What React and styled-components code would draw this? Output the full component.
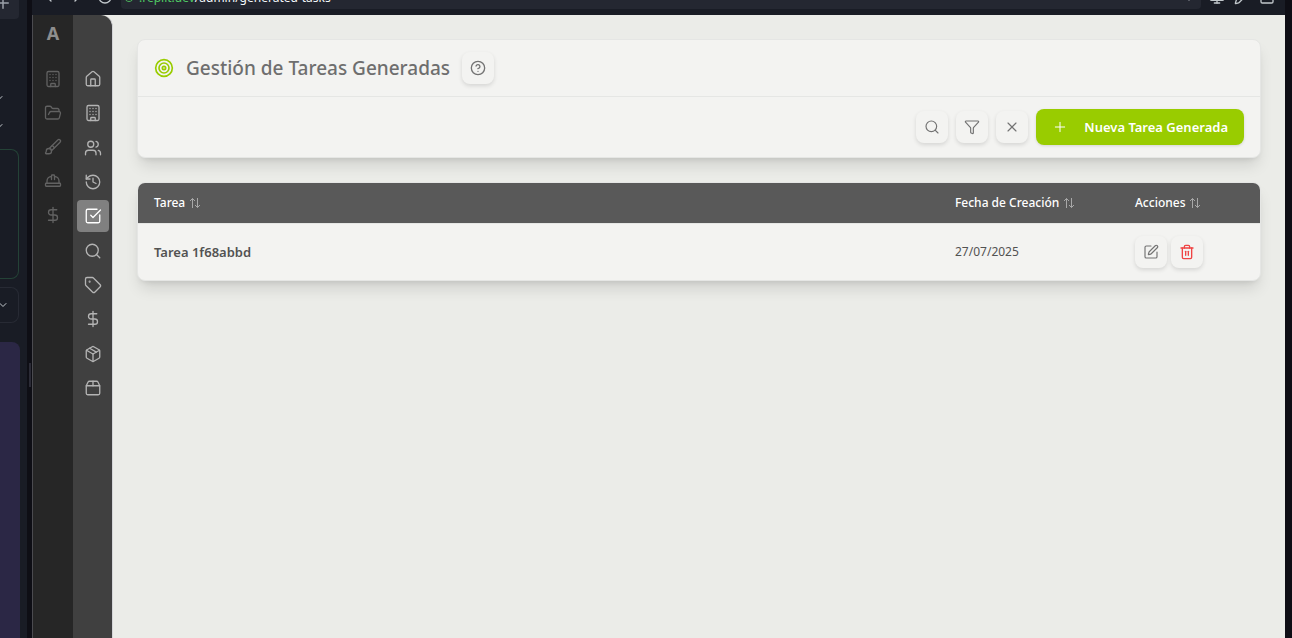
import React from "react";
import styled, { createGlobalStyle } from "styled-components";
import {
  House, Building, Users, History, SquareCheckBig, Search, Tag, DollarSign, Package, Package2,
  FolderOpen, Brush, HardHat, CircleHelp, Funnel, X, Plus, SquarePen, Trash2, ChevronDown,
  ChevronLeft, ChevronRight, RotateCw, Monitor, Pencil, Square, Target, Pin,
} from "lucide-react";

const GlobalStyle = createGlobalStyle`
  *, *::before, *::after { box-sizing: border-box; }
  body {
    margin: 0;
    background: #0e0e15;
    color: #525252;
    font-family: "Noto Sans", "Open Sans", sans-serif;
    font-size: 14px;
  }
  button { font: inherit; color: inherit; border: 0; padding: 0; background: none; cursor: pointer; }
  a { color: inherit; text-decoration: none; }
  svg { flex: none; }
`;

const Workspace = styled.div`
  display: flex;
  height: 100vh;
  padding-right: 7px;
  overflow: hidden;
`;

const AssistantPane = styled.aside`
  display: flex;
  flex-direction: column;
  width: 27px;
  flex: none;
  padding-right: 8px;
  background: #191c25;
  color: #c2c8cc;
`;

const NewTab = styled.button`
  display: flex;
  justify-content: flex-end;
  align-items: flex-end;
  height: 19px;
  padding: 0 7px 7px 0;
  background: #242731;
  border-radius: 0 0 4px 0;
  overflow: hidden;
  color: #9ba1a9;
`;

const FoldToggle = styled.button`
  display: flex;
  height: 28px;
  width: ${(p) => p.$width || 5}px;
  align-items: center;
  justify-content: flex-end;
  overflow: hidden;
`;

const FoldList = styled.div`
  display: flex;
  flex-direction: column;
  padding-top: 65px;
  height: 130px;
`;

const Card = styled.div`
  display: flex;
  align-items: center;
  height: ${(p) => p.$height}px;
  margin-bottom: ${(p) => p.$gap}px;
  border: 1px solid ${(p) => p.$line};
  border-left: 0;
  border-radius: 0 8px 8px 0;
`;

const Message = styled.div`
  flex: 1;
  margin-right: -1px;
  background: #2b2745;
  border-radius: 0 8px 0 0;
`;

const Splitter = styled.div`
  display: flex;
  align-items: flex-start;
  justify-content: center;
  width: 5px;
  flex: none;
  padding-top: 363px;
`;

const Grip = styled.div`
  width: 2px;
  height: 24px;
  background: #2b2b36;
`;

const Preview = styled.section`
  display: flex;
  flex-direction: column;
  flex: 1;
  min-width: 0;
  background: #191c25;
`;

const AddressRow = styled.div`
  display: flex;
  align-items: flex-end;
  gap: 8px;
  height: 15px;
  padding: 0 10px 6px 9px;
  overflow: hidden;
  color: #c2c8cc;
`;

const NavGroup = styled.div`
  display: flex;
  align-items: center;
  gap: ${(p) => p.$gap}px;
  height: 24px;
  flex: none;
`;

const Address = styled.div`
  display: flex;
  align-items: center;
  gap: 5px;
  flex: 1;
  height: 24px;
  padding: 0 8px 0 3px;
  background: #242731;
  border-radius: 4px;
  font-size: 12px;
  color: #f5f9fc;
`;

const Secure = styled.span`
  width: 10px;
  height: 10px;
  border: 1px solid #4bb35c;
  border-radius: 50%;
`;

const Url = styled.span`
  flex: 1;
  b { font-weight: 400; color: #4fc963; }
`;

const AppFrame = styled.div`
  display: flex;
  flex: 1;
  min-height: 0;
  border-left: 1px solid #4b4b50;
  background: #ebece8;
`;

const Rail = styled.nav`
  display: flex;
  flex-direction: column;
  align-items: center;
  width: 40px;
  flex: none;
  background: #262626;
  color: #626262;
`;

const SectionNav = styled(Rail)`
  background: #404040;
  color: #b4b4b4;
  border-right: 1px solid #d4d5d8;
  border-top-right-radius: 12px;
  padding-top: 48px;
`;

const Brand = styled.a`
  height: 48px;
  padding-top: 6px;
  font-size: 18px;
  line-height: 24px;
  font-weight: 700;
  color: #8e8e8e;
`;

const RailList = styled.div`
  display: flex;
  flex-direction: column;
  justify-content: space-between;
  height: ${(p) => p.$height}px;
`;

const RailItem = styled.a`
  display: flex;
  align-items: center;
  justify-content: center;
  width: 32px;
  height: 32px;
  border-radius: 4px;
  background: ${(p) => (p.$active ? "#808080" : "transparent")};
  color: ${(p) => (p.$active ? "#ffffff" : "inherit")};
`;

const Main = styled.main`
  flex: 1;
  min-width: 0;
  padding: 24px;
`;

const Panel = styled.section`
  background: #f3f3f1;
  border: 1px solid #e5e6e4;
  border-radius: 8px;
  box-shadow: 0 10px 15px -3px rgba(0, 0, 0, 0.12), 0 4px 6px -4px rgba(0, 0, 0, 0.12);
  margin-bottom: 24px;
  overflow: hidden;
`;

const TitleRow = styled.header`
  display: flex;
  align-items: center;
  height: 57px;
  padding: 0 16px;
  border-bottom: 1px solid #e5e6e4;
  color: #99cc00;
`;

const Title = styled.h1`
  margin: 0 12px;
  font-size: 19px;
  line-height: 28px;
  font-weight: 500;
  color: #6e6e6e;
`;

const Toolbar = styled.div`
  display: flex;
  align-items: center;
  justify-content: flex-end;
  gap: 8px;
  height: 60px;
  padding: 0 16px;
`;

const IconButton = styled.button`
  display: flex;
  align-items: center;
  justify-content: center;
  width: 32px;
  height: 32px;
  border-radius: 8px;
  background: #f3f3f1;
  color: ${(p) => (p.$danger ? "#ef4444" : "#737373")};
  box-shadow: 0 2px 4px rgba(0, 0, 0, 0.12);
`;

const PrimaryButton = styled.button`
  display: flex;
  align-items: center;
  gap: 16px;
  height: 36px;
  padding: 0 16px;
  border-radius: 8px;
  background: #99cc00;
  color: #ffffff;
  font-size: 13px;
  font-weight: 600;
  white-space: nowrap;
  box-shadow: 0 1px 3px rgba(0, 0, 0, 0.12);
`;

const Table = styled.table`
  width: 100%;
  border-collapse: collapse;
  table-layout: fixed;
`;

const Th = styled.th`
  height: 40px;
  padding: 0 0 0 16px;
  width: ${(p) => p.$width || "auto"};
  background: #595959;
  color: #ffffff;
  font-size: 12px;
  font-weight: 500;
  text-align: left;
  border-bottom: 1px solid #e5e6e4;
`;

const SortButton = styled.button`
  display: flex;
  align-items: center;
  gap: 4px;
  white-space: nowrap;
  svg { color: #a8a8a8; }
`;

const Td = styled.td`
  height: 57px;
  padding: 0 0 0 16px;
  font-size: ${(p) => (p.$strong ? 13 : 12)}px;
  font-weight: ${(p) => (p.$strong ? 600 : 400)};
`;

const Actions = styled.div`
  display: flex;
  gap: 4px;
`;

const SortIcon = () => (
  <svg width="12" height="12" viewBox="0 0 12 12" fill="none" stroke="currentColor" aria-hidden="true">
    <path d="M3.5 11V1.5M1 4l2.5-2.500L6 4M8.500 1v9.500M6 8l2.500 2.500L11 8" />
  </svg>
);

const clients = [
  ["Empresas", Building], ["Proyectos", FolderOpen], ["Diseño", Brush], ["Obra", HardHat], ["Finanzas", DollarSign],
];

const sections = [
  ["Inicio", House], ["Empresas", Building], ["Usuarios", Users], ["Historial", History],
  ["Tareas", SquareCheckBig, true], ["Buscar", Search], ["Etiquetas", Tag], ["Precios", DollarSign],
  ["Productos", Package], ["Paquetes", Package2],
];

const columns = [["Tarea"], ["Fecha de Creación", "180px"], ["Acciones", "141px"]];

export default function App() {
  return (
    <Workspace>
      <GlobalStyle />
      <AssistantPane>
        <NewTab aria-label="Nueva pestaña"><Plus size={18} /></NewTab>
        <FoldList>
          <FoldToggle aria-label="Desplegar"><ChevronDown size={12} /></FoldToggle>
          <FoldToggle aria-label="Desplegar"><ChevronDown size={12} /></FoldToggle>
        </FoldList>
        <Card $height={130} $gap={8} $line="#244237" />
        <Card $height={36} $gap={19} $line="#272a34">
          <FoldToggle $width={9} aria-label="Desplegar"><ChevronDown size={12} /></FoldToggle>
        </Card>
        <Message />
      </AssistantPane>
      <Splitter><Grip /></Splitter>
      <Preview>
        <AddressRow>
          <NavGroup $gap={12}>
            <ChevronLeft size={16} /><ChevronRight size={16} /><RotateCw size={16} />
          </NavGroup>
          <Address>
            <Secure />
            <Url><b>.replit.dev</b>/admin/generated-tasks</Url>
            <Pin size={8} />
          </Address>
          <NavGroup $gap={9}><Monitor size={16} /><Pencil size={16} /><Square size={16} /></NavGroup>
        </AddressRow>
        <AppFrame>
          <Rail aria-label="Principal">
            <Brand href="#">A</Brand>
            <RailList $height={168}>
              {clients.map(([label, Icon]) => (
                <RailItem key={label} href="#" aria-label={label}><Icon size={18} strokeWidth={1.75} /></RailItem>
              ))}
            </RailList>
          </Rail>
          <SectionNav aria-label="Secciones">
            <RailList $height={341}>
              {sections.map(([label, Icon, active]) => (
                <RailItem key={label} href="#" aria-label={label} $active={active}>
                  <Icon size={18} strokeWidth={1.75} />
                </RailItem>
              ))}
            </RailList>
          </SectionNav>
          <Main>
            <Panel>
              <TitleRow>
                <Target size={20} />
                <Title>Gestión de Tareas Generadas</Title>
                <IconButton aria-label="Ayuda"><CircleHelp size={16} /></IconButton>
              </TitleRow>
              <Toolbar>
                <IconButton aria-label="Buscar"><Search size={16} strokeWidth={1.75} /></IconButton>
                <IconButton aria-label="Filtrar"><Funnel size={16} strokeWidth={1.75} /></IconButton>
                <IconButton aria-label="Limpiar"><X size={16} strokeWidth={1.75} /></IconButton>
                <PrimaryButton><Plus size={16} strokeWidth={1.5} />Nueva Tarea Generada</PrimaryButton>
              </Toolbar>
            </Panel>
            <Panel>
              <Table>
                <thead>
                  <tr>
                    {columns.map(([label, width]) => (
                      <Th key={label} $width={width}><SortButton>{label}<SortIcon /></SortButton></Th>
                    ))}
                  </tr>
                </thead>
                <tbody>
                  <tr>
                    <Td $strong>Tarea 1f68abbd</Td>
                    <Td>27/07/2025</Td>
                    <Td>
                      <Actions>
                        <IconButton aria-label="Editar"><SquarePen size={16} strokeWidth={1.75} /></IconButton>
                        <IconButton aria-label="Eliminar" $danger><Trash2 size={16} /></IconButton>
                      </Actions>
                    </Td>
                  </tr>
                </tbody>
              </Table>
            </Panel>
          </Main>
        </AppFrame>
      </Preview>
    </Workspace>
  );
}
